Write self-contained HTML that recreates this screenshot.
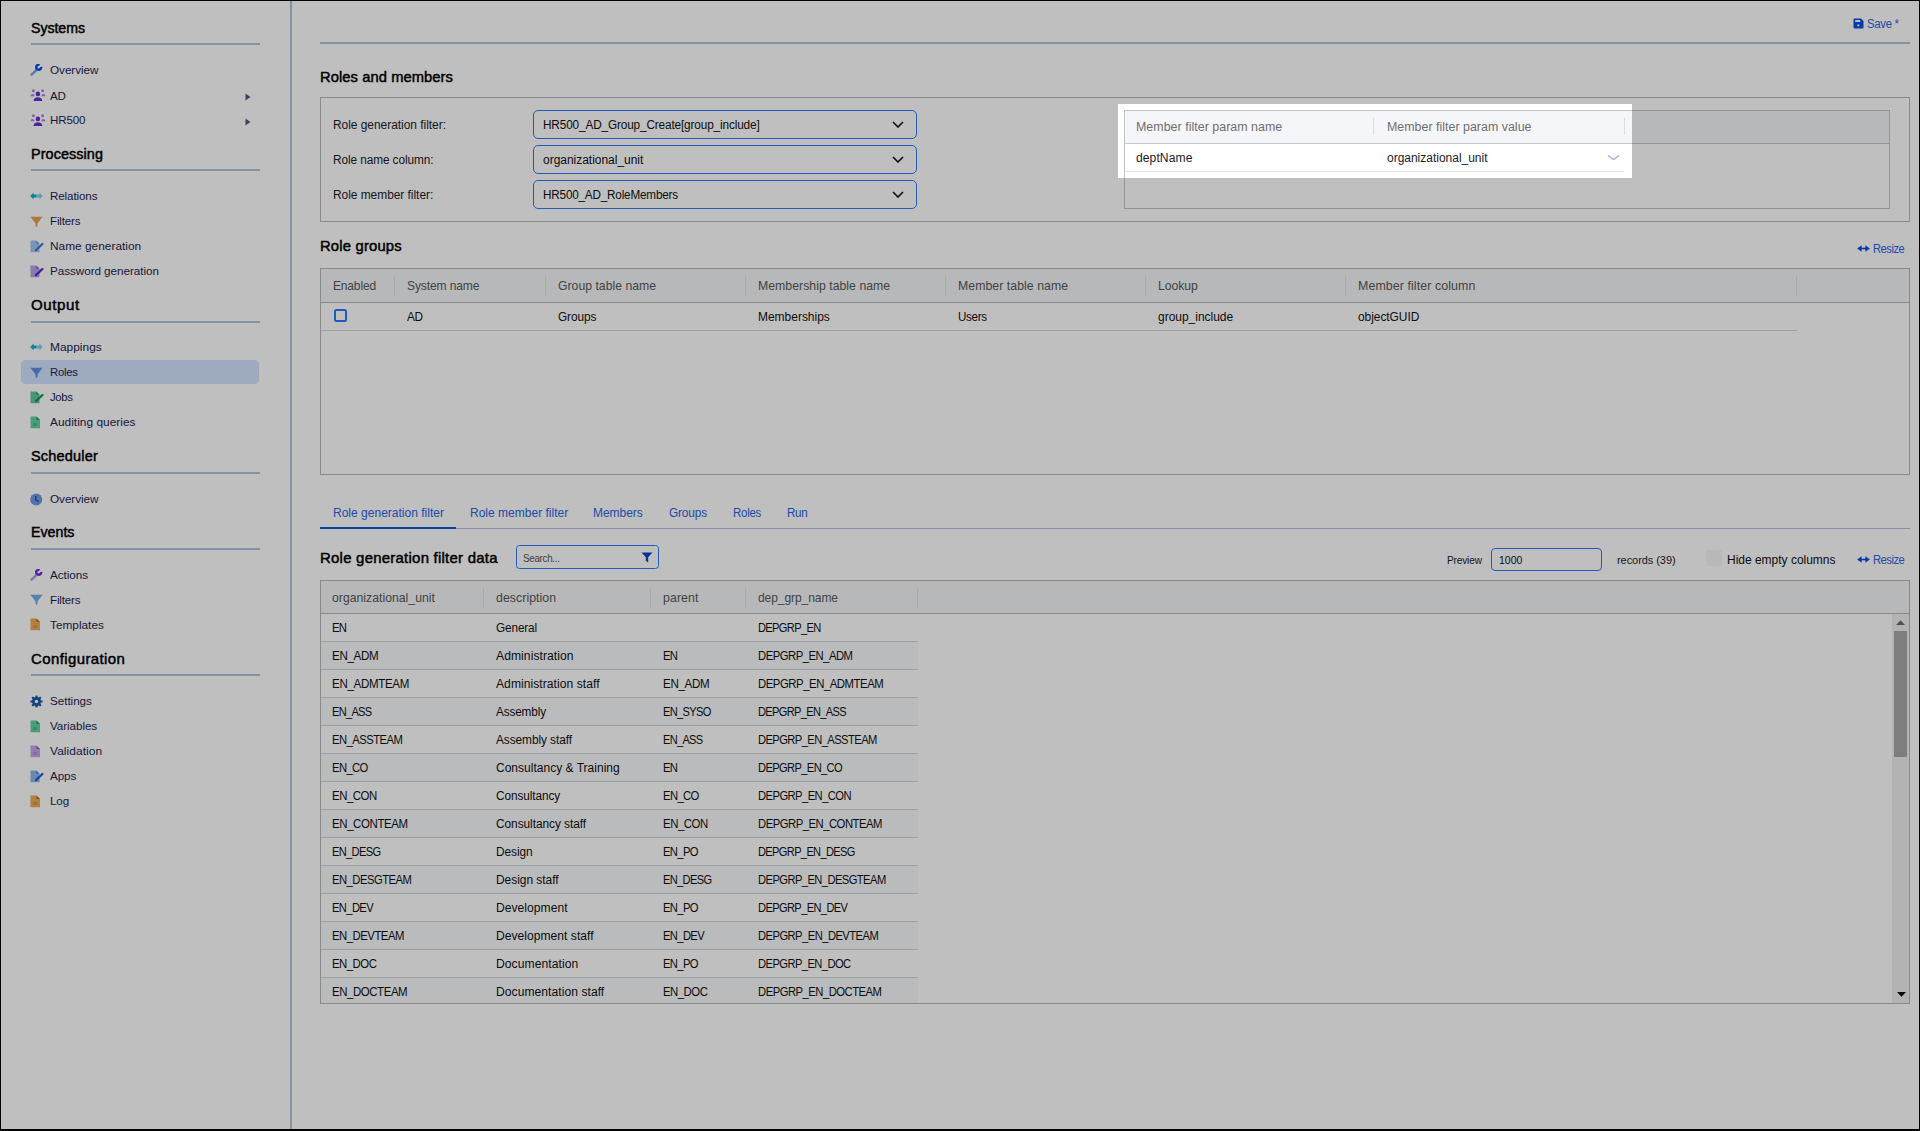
<!DOCTYPE html>
<html><head><meta charset="utf-8"><style>
html,body{margin:0;padding:0;}
body{width:1920px;height:1131px;overflow:hidden;background:#000;font-family:"Liberation Sans", sans-serif;}
#app{position:absolute;left:1px;top:1px;width:1918px;height:1128px;background:#fff;overflow:hidden;}
#inner{position:absolute;left:-1px;top:-1px;width:1920px;height:1131px;}
</style></head><body>
<div id="app"><div id="inner">
<div style="position:absolute;left:31px;top:18px;font-size:14.20px;line-height:20px;color:#000;font-weight:normal;white-space:nowrap;letter-spacing:-0.037px;transform:scaleX(0.9959);transform-origin:0 0;-webkit-text-stroke:0.45px #000;">Systems</div><div style="position:absolute;left:31px;top:43px;width:229px;height:2px;background:#b5c2de"></div><div style="position:absolute;left:30px;top:64.2px;line-height:0"><svg width="14" height="13" viewBox="0 0 14 13"><path d="M1.6 10.6 L6.6 5.9" stroke="#7aa6dc" stroke-width="2.6" stroke-linecap="round"/><path d="M11.2 2.9 A2.5 2.5 0 1 1 9.6 0.9" stroke="#0a4fe0" stroke-width="2.5" fill="none"/></svg></div><div style="position:absolute;left:50px;top:60px;font-size:11.80px;line-height:20px;color:#1e1e52;font-weight:normal;white-space:nowrap;letter-spacing:-0.048px;transform:scaleX(0.9932);transform-origin:0 0;">Overview</div><div style="position:absolute;left:30px;top:88.7px;line-height:0"><svg width="16" height="13" viewBox="0 0 16 13"><circle cx="3.4" cy="1.7" r="1.5" fill="#a48ade"/><circle cx="12.6" cy="1.7" r="1.5" fill="#a48ade"/><path d="M0.5 7.2 Q0.8 5 2.6 5 Q4.4 5 4.7 7.2 Z" fill="#a48ade"/><path d="M11.3 7.2 Q11.6 5 13.4 5 Q15.2 5 15.5 7.2 Z" fill="#a48ade"/><circle cx="7.9" cy="4.9" r="2.3" fill="#6630cc"/><path d="M3.5 12.1 Q3.8 8.3 7.9 8.3 Q12 8.3 12.3 12.1 Z" fill="#6630cc"/></svg></div><div style="position:absolute;left:50px;top:86px;font-size:11.80px;line-height:20px;color:#1e1e52;font-weight:normal;white-space:nowrap;letter-spacing:-0.287px;transform:scaleX(0.9825);transform-origin:0 0;">AD</div><svg style="position:absolute;left:245px;top:92.5px" width="6" height="8" viewBox="0 0 6 8"><path d="M0.5 0.5 L5.5 4 L0.5 7.5 Z" fill="#555a80"/></svg><div style="position:absolute;left:30px;top:113.7px;line-height:0"><svg width="16" height="13" viewBox="0 0 16 13"><circle cx="3.4" cy="1.7" r="1.5" fill="#a48ade"/><circle cx="12.6" cy="1.7" r="1.5" fill="#a48ade"/><path d="M0.5 7.2 Q0.8 5 2.6 5 Q4.4 5 4.7 7.2 Z" fill="#a48ade"/><path d="M11.3 7.2 Q11.6 5 13.4 5 Q15.2 5 15.5 7.2 Z" fill="#a48ade"/><circle cx="7.9" cy="4.9" r="2.3" fill="#6630cc"/><path d="M3.5 12.1 Q3.8 8.3 7.9 8.3 Q12 8.3 12.3 12.1 Z" fill="#6630cc"/></svg></div><div style="position:absolute;left:50px;top:110px;font-size:11.80px;line-height:20px;color:#1e1e52;font-weight:normal;white-space:nowrap;letter-spacing:-0.166px;transform:scaleX(0.9819);transform-origin:0 0;">HR500</div><svg style="position:absolute;left:245px;top:117.5px" width="6" height="8" viewBox="0 0 6 8"><path d="M0.5 0.5 L5.5 4 L0.5 7.5 Z" fill="#555a80"/></svg><div style="position:absolute;left:31px;top:144px;font-size:14.20px;line-height:20px;color:#000;font-weight:normal;white-space:nowrap;letter-spacing:0.097px;transform:scaleX(1.0124);transform-origin:0 0;-webkit-text-stroke:0.45px #000;">Processing</div><div style="position:absolute;left:31px;top:169px;width:229px;height:2px;background:#b5c2de"></div><div style="position:absolute;left:30px;top:192.1px;line-height:0"><svg width="13" height="8" viewBox="0 0 13 8"><path d="M0.2 4 L3.6 0.4 L3.6 2.6 L6.6 2.6 L6.6 5.4 L3.6 5.4 L3.6 7.6 Z" fill="#0eaed2"/><path d="M12.8 4 L9.4 0.4 L9.4 2.6 L6.4 2.6 L6.4 5.4 L9.4 5.4 L9.4 7.6 Z" fill="#86d2e2"/></svg></div><div style="position:absolute;left:50px;top:186px;font-size:11.80px;line-height:20px;color:#1e1e52;font-weight:normal;white-space:nowrap;letter-spacing:-0.108px;transform:scaleX(0.9825);transform-origin:0 0;">Relations</div><div style="position:absolute;left:30px;top:215.7px;line-height:0"><svg width="13" height="12" viewBox="0 0 13 12"><path d="M0.3 0.8 L12.7 0.8 L7.6 7.2 L7.3 10.8 L5.7 10.8 L5.4 7.2 Z" fill="#e6a050"/></svg></div><div style="position:absolute;left:50px;top:211px;font-size:11.80px;line-height:20px;color:#1e1e52;font-weight:normal;white-space:nowrap;letter-spacing:-0.135px;transform:scaleX(0.9747);transform-origin:0 0;">Filters</div><div style="position:absolute;left:30px;top:240.1px;line-height:0"><svg width="14" height="13" viewBox="0 0 14 13"><path d="M0.5 0.5 L6.2 0.5 L9.5 3.8 L9.5 12.2 L0.5 12.2 Z" fill="#a6c6ee"/><path d="M6.2 0.5 L9.5 3.8 L6.2 3.8 Z" fill="#6c9ee6"/><path d="M6 10.2 L12.4 4" stroke="#3b7ee0" stroke-width="2.3" stroke-linecap="round"/></svg></div><div style="position:absolute;left:50px;top:236px;font-size:11.80px;line-height:20px;color:#1e1e52;font-weight:normal;white-space:nowrap;letter-spacing:0.025px;transform:scaleX(1.0039);transform-origin:0 0;">Name generation</div><div style="position:absolute;left:30px;top:265.1px;line-height:0"><svg width="14" height="13" viewBox="0 0 14 13"><path d="M0.5 0.5 L6.2 0.5 L9.5 3.8 L9.5 12.2 L0.5 12.2 Z" fill="#b9a2ea"/><path d="M6.2 0.5 L9.5 3.8 L6.2 3.8 Z" fill="#8a66d8"/><path d="M6 10.2 L12.4 4" stroke="#5a2cc8" stroke-width="2.3" stroke-linecap="round"/></svg></div><div style="position:absolute;left:50px;top:261px;font-size:11.80px;line-height:20px;color:#1e1e52;font-weight:normal;white-space:nowrap;letter-spacing:-0.054px;transform:scaleX(0.9913);transform-origin:0 0;">Password generation</div><div style="position:absolute;left:31px;top:295px;font-size:14.20px;line-height:20px;color:#000;font-weight:normal;white-space:nowrap;letter-spacing:0.550px;transform:scaleX(1.0645);transform-origin:0 0;-webkit-text-stroke:0.45px #000;">Output</div><div style="position:absolute;left:31px;top:321px;width:229px;height:2px;background:#b5c2de"></div><div style="position:absolute;left:30px;top:342.9px;line-height:0"><svg width="13" height="8" viewBox="0 0 13 8"><path d="M0.2 4 L3.6 0.4 L3.6 2.6 L6.6 2.6 L6.6 5.4 L3.6 5.4 L3.6 7.6 Z" fill="#0eaed2"/><path d="M12.8 4 L9.4 0.4 L9.4 2.6 L6.4 2.6 L6.4 5.4 L9.4 5.4 L9.4 7.6 Z" fill="#86d2e2"/></svg></div><div style="position:absolute;left:50px;top:337px;font-size:11.80px;line-height:20px;color:#1e1e52;font-weight:normal;white-space:nowrap;letter-spacing:0.044px;transform:scaleX(1.0060);transform-origin:0 0;">Mappings</div><div style="position:absolute;left:21px;top:360px;width:238px;height:24px;border-radius:4px;background:#d3e3ff"></div><div style="position:absolute;left:30px;top:366.5px;line-height:0"><svg width="13" height="12" viewBox="0 0 13 12"><path d="M0.3 0.8 L12.7 0.8 L7.6 7.2 L7.3 10.8 L5.7 10.8 L5.4 7.2 Z" fill="#5b92e0"/></svg></div><div style="position:absolute;left:50px;top:362px;font-size:11.80px;line-height:20px;color:#1e1e52;font-weight:normal;white-space:nowrap;letter-spacing:-0.283px;transform:scaleX(0.9624);transform-origin:0 0;">Roles</div><div style="position:absolute;left:30px;top:390.9px;line-height:0"><svg width="14" height="13" viewBox="0 0 14 13"><path d="M0.5 0.5 L6.2 0.5 L9.5 3.8 L9.5 12.2 L0.5 12.2 Z" fill="#62c79c"/><path d="M6.2 0.5 L9.5 3.8 L6.2 3.8 Z" fill="#2f9c6c"/><path d="M6 10.2 L12.4 4" stroke="#14975c" stroke-width="2.3" stroke-linecap="round"/></svg></div><div style="position:absolute;left:50px;top:387px;font-size:11.80px;line-height:20px;color:#1e1e52;font-weight:normal;white-space:nowrap;letter-spacing:-0.336px;transform:scaleX(0.9596);transform-origin:0 0;">Jobs</div><div style="position:absolute;left:30px;top:415.9px;line-height:0"><svg width="11" height="13" viewBox="0 0 11 13"><path d="M0.5 0.5 L6.4 0.5 L10 4.1 L10 12.2 L0.5 12.2 Z" fill="#68d0a4"/><path d="M6.4 0.5 L10 4.1 L6.4 4.1 Z" fill="#1f9a62"/><rect x="3" y="7.2" width="4.5" height="2.6" fill="#1f9a62" opacity="0.35"/></svg></div><div style="position:absolute;left:50px;top:412px;font-size:11.80px;line-height:20px;color:#1e1e52;font-weight:normal;white-space:nowrap;letter-spacing:0.029px;transform:scaleX(1.0051);transform-origin:0 0;">Auditing queries</div><div style="position:absolute;left:31px;top:446px;font-size:14.20px;line-height:20px;color:#000;font-weight:normal;white-space:nowrap;letter-spacing:0.177px;transform:scaleX(1.0221);transform-origin:0 0;-webkit-text-stroke:0.45px #000;">Scheduler</div><div style="position:absolute;left:31px;top:472px;width:229px;height:2px;background:#b5c2de"></div><div style="position:absolute;left:30px;top:492.5px;line-height:0"><svg width="13" height="13" viewBox="0 0 13 13"><circle cx="6.2" cy="6.5" r="6" fill="#6f9be0"/><path d="M5.8 3 L5.8 7 L8.4 8.6" stroke="#1d48a8" stroke-width="1.3" fill="none"/></svg></div><div style="position:absolute;left:50px;top:489px;font-size:11.80px;line-height:20px;color:#1e1e52;font-weight:normal;white-space:nowrap;letter-spacing:-0.048px;transform:scaleX(0.9932);transform-origin:0 0;">Overview</div><div style="position:absolute;left:31px;top:522px;font-size:14.20px;line-height:20px;color:#000;font-weight:normal;white-space:nowrap;letter-spacing:0.009px;transform:scaleX(1.0010);transform-origin:0 0;-webkit-text-stroke:0.45px #000;">Events</div><div style="position:absolute;left:31px;top:548px;width:229px;height:2px;background:#b5c2de"></div><div style="position:absolute;left:30px;top:569.0px;line-height:0"><svg width="14" height="13" viewBox="0 0 14 13"><path d="M1.6 10.6 L6.6 5.9" stroke="#b39ee6" stroke-width="2.6" stroke-linecap="round"/><path d="M11.2 2.9 A2.5 2.5 0 1 1 9.6 0.9" stroke="#6a36d8" stroke-width="2.5" fill="none"/></svg></div><div style="position:absolute;left:50px;top:565px;font-size:11.80px;line-height:20px;color:#1e1e52;font-weight:normal;white-space:nowrap;letter-spacing:-0.048px;transform:scaleX(0.9926);transform-origin:0 0;">Actions</div><div style="position:absolute;left:30px;top:594.0px;line-height:0"><svg width="13" height="12" viewBox="0 0 13 12"><path d="M0.3 0.8 L12.7 0.8 L7.6 7.2 L7.3 10.8 L5.7 10.8 L5.4 7.2 Z" fill="#72ace8"/></svg></div><div style="position:absolute;left:50px;top:590px;font-size:11.80px;line-height:20px;color:#1e1e52;font-weight:normal;white-space:nowrap;letter-spacing:-0.135px;transform:scaleX(0.9747);transform-origin:0 0;">Filters</div><div style="position:absolute;left:30px;top:618.4px;line-height:0"><svg width="11" height="13" viewBox="0 0 11 13"><path d="M0.5 0.5 L6.4 0.5 L10 4.1 L10 12.2 L0.5 12.2 Z" fill="#ecac58"/><path d="M6.4 0.5 L10 4.1 L6.4 4.1 Z" fill="#c86a14"/><rect x="3" y="7.2" width="4.5" height="2.6" fill="#c86a14" opacity="0.35"/></svg></div><div style="position:absolute;left:50px;top:615px;font-size:11.80px;line-height:20px;color:#1e1e52;font-weight:normal;white-space:nowrap;letter-spacing:0.007px;transform:scaleX(1.0011);transform-origin:0 0;">Templates</div><div style="position:absolute;left:31px;top:649px;font-size:14.20px;line-height:20px;color:#000;font-weight:normal;white-space:nowrap;letter-spacing:0.383px;transform:scaleX(1.0544);transform-origin:0 0;-webkit-text-stroke:0.45px #000;">Configuration</div><div style="position:absolute;left:31px;top:674px;width:229px;height:2px;background:#b5c2de"></div><div style="position:absolute;left:30px;top:694.9px;line-height:0"><svg width="13" height="13" viewBox="0 0 13 13"><g fill="#1c58a8"><circle cx="6.5" cy="6.5" r="4.5"/><rect x="5.4" y="0.4" width="2.2" height="12.2" rx="0.5" transform="rotate(0 6.5 6.5)"/><rect x="5.4" y="0.4" width="2.2" height="12.2" rx="0.5" transform="rotate(45 6.5 6.5)"/><rect x="5.4" y="0.4" width="2.2" height="12.2" rx="0.5" transform="rotate(90 6.5 6.5)"/><rect x="5.4" y="0.4" width="2.2" height="12.2" rx="0.5" transform="rotate(135 6.5 6.5)"/></g><circle cx="6.5" cy="6.5" r="1.7" fill="#fff"/></svg></div><div style="position:absolute;left:50px;top:691px;font-size:11.80px;line-height:20px;color:#1e1e52;font-weight:normal;white-space:nowrap;letter-spacing:-0.053px;transform:scaleX(0.9912);transform-origin:0 0;">Settings</div><div style="position:absolute;left:30px;top:720.1px;line-height:0"><svg width="11" height="13" viewBox="0 0 11 13"><path d="M0.5 0.5 L6.4 0.5 L10 4.1 L10 12.2 L0.5 12.2 Z" fill="#68d0a4"/><path d="M6.4 0.5 L10 4.1 L6.4 4.1 Z" fill="#1f9a62"/><rect x="3" y="7.2" width="4.5" height="2.6" fill="#1f9a62" opacity="0.35"/></svg></div><div style="position:absolute;left:50px;top:716px;font-size:11.80px;line-height:20px;color:#1e1e52;font-weight:normal;white-space:nowrap;letter-spacing:-0.069px;transform:scaleX(0.9885);transform-origin:0 0;">Variables</div><div style="position:absolute;left:30px;top:745.1px;line-height:0"><svg width="11" height="13" viewBox="0 0 11 13"><path d="M0.5 0.5 L6.4 0.5 L10 4.1 L10 12.2 L0.5 12.2 Z" fill="#c0a8ee"/><path d="M6.4 0.5 L10 4.1 L6.4 4.1 Z" fill="#8a5fd8"/><rect x="3" y="7.2" width="4.5" height="2.6" fill="#8a5fd8" opacity="0.35"/></svg></div><div style="position:absolute;left:50px;top:741px;font-size:11.80px;line-height:20px;color:#1e1e52;font-weight:normal;white-space:nowrap;letter-spacing:0.069px;transform:scaleX(1.0122);transform-origin:0 0;">Validation</div><div style="position:absolute;left:30px;top:770.1px;line-height:0"><svg width="14" height="13" viewBox="0 0 14 13"><path d="M0.5 0.5 L6.2 0.5 L9.5 3.8 L9.5 12.2 L0.5 12.2 Z" fill="#8fb6ea"/><path d="M6.2 0.5 L9.5 3.8 L6.2 3.8 Z" fill="#4d86e0"/><path d="M6 10.2 L12.4 4" stroke="#1f5fd6" stroke-width="2.3" stroke-linecap="round"/></svg></div><div style="position:absolute;left:50px;top:766px;font-size:11.80px;line-height:20px;color:#1e1e52;font-weight:normal;white-space:nowrap;letter-spacing:-0.115px;transform:scaleX(0.9871);transform-origin:0 0;">Apps</div><div style="position:absolute;left:30px;top:795.1px;line-height:0"><svg width="11" height="13" viewBox="0 0 11 13"><path d="M0.5 0.5 L6.4 0.5 L10 4.1 L10 12.2 L0.5 12.2 Z" fill="#ecac58"/><path d="M6.4 0.5 L10 4.1 L6.4 4.1 Z" fill="#c86a14"/><rect x="3" y="7.2" width="4.5" height="2.6" fill="#c86a14" opacity="0.35"/></svg></div><div style="position:absolute;left:50px;top:791px;font-size:11.80px;line-height:20px;color:#1e1e52;font-weight:normal;white-space:nowrap;letter-spacing:-0.126px;transform:scaleX(0.9872);transform-origin:0 0;">Log</div><div style="position:absolute;left:290px;top:0px;width:2px;height:1131px;background:#b6c0d8"></div>
<div style="position:absolute;left:320px;top:42px;width:1590px;height:2px;background:#b5c0d8"></div><svg style="position:absolute;left:1853px;top:18px" width="11" height="11" viewBox="0 0 11 11"><path d="M1.2 0.5 L8 0.5 L10.5 3 L10.5 9.6 Q10.5 10.5 9.6 10.5 L1.4 10.5 Q0.5 10.5 0.5 9.6 L0.5 1.4 Q0.5 0.5 1.2 0.5 Z" fill="#0a4fe0"/><rect x="2.2" y="2" width="5" height="2" fill="#fff"/><circle cx="5.3" cy="7.3" r="1.1" fill="#fff"/></svg><div style="position:absolute;left:1867px;top:14px;font-size:12.00px;line-height:20px;color:#2a66e0;font-weight:normal;white-space:nowrap;letter-spacing:-0.337px;transform:scaleX(0.9523);transform-origin:0 0;">Save *</div><div style="position:absolute;left:320px;top:67px;font-size:14.60px;line-height:20px;color:#000;font-weight:normal;white-space:nowrap;letter-spacing:0.074px;transform:scaleX(1.0090);transform-origin:0 0;-webkit-text-stroke:0.45px #000;">Roles and members</div><div style="position:absolute;left:320px;top:97px;width:1590px;height:125px;box-sizing:border-box;border:1px solid #b8b8b8"></div><div style="position:absolute;left:332.5px;top:115px;font-size:12.00px;line-height:20px;color:#1c1c2a;font-weight:normal;white-space:nowrap;letter-spacing:-0.025px;transform:scaleX(0.9952);transform-origin:0 0;">Role generation filter:</div><div style="position:absolute;left:533px;top:109.5px;width:384px;height:29px;box-sizing:border-box;border:1.6px solid #2f7bff;border-radius:5px"></div><div style="position:absolute;left:543px;top:115px;font-size:12.00px;line-height:20px;color:#111;font-weight:normal;white-space:nowrap;letter-spacing:-0.127px;transform:scaleX(0.9803);transform-origin:0 0;">HR500_AD_Group_Create[group_include]</div><svg style="position:absolute;left:892px;top:121.0px" width="12" height="7" viewBox="0 0 12 7"><path d="M1 1 L6 6 L11 1" stroke="#111" stroke-width="1.6" fill="none"/></svg><div style="position:absolute;left:332.5px;top:150px;font-size:12.00px;line-height:20px;color:#1c1c2a;font-weight:normal;white-space:nowrap;letter-spacing:-0.092px;transform:scaleX(0.9858);transform-origin:0 0;">Role name column:</div><div style="position:absolute;left:533px;top:144.5px;width:384px;height:29px;box-sizing:border-box;border:1.6px solid #2f7bff;border-radius:5px"></div><div style="position:absolute;left:543px;top:150px;font-size:12.00px;line-height:20px;color:#111;font-weight:normal;white-space:nowrap;letter-spacing:-0.011px;transform:scaleX(0.9980);transform-origin:0 0;">organizational_unit</div><svg style="position:absolute;left:892px;top:156.0px" width="12" height="7" viewBox="0 0 12 7"><path d="M1 1 L6 6 L11 1" stroke="#111" stroke-width="1.6" fill="none"/></svg><div style="position:absolute;left:332.5px;top:185px;font-size:12.00px;line-height:20px;color:#1c1c2a;font-weight:normal;white-space:nowrap;letter-spacing:-0.031px;transform:scaleX(0.9945);transform-origin:0 0;">Role member filter:</div><div style="position:absolute;left:533px;top:179.5px;width:384px;height:29px;box-sizing:border-box;border:1.6px solid #2f7bff;border-radius:5px"></div><div style="position:absolute;left:543px;top:185px;font-size:12.00px;line-height:20px;color:#111;font-weight:normal;white-space:nowrap;letter-spacing:-0.184px;transform:scaleX(0.9754);transform-origin:0 0;">HR500_AD_RoleMembers</div><svg style="position:absolute;left:892px;top:191.0px" width="12" height="7" viewBox="0 0 12 7"><path d="M1 1 L6 6 L11 1" stroke="#111" stroke-width="1.6" fill="none"/></svg><div style="position:absolute;left:1124px;top:110px;width:766px;height:99px;box-sizing:border-box;border:1px solid #c4c4c4"></div><div style="position:absolute;left:1125px;top:111px;width:764px;height:32px;background:#f5f6f9;border-bottom:1px solid #c8c8c8"></div><div style="position:absolute;left:1136px;top:117px;font-size:12.30px;line-height:20px;color:#6e6e6e;font-weight:normal;white-space:nowrap;letter-spacing:0.043px;transform:scaleX(1.0068);transform-origin:0 0;">Member filter param name</div><div style="position:absolute;left:1387px;top:117px;font-size:12.30px;line-height:20px;color:#6e6e6e;font-weight:normal;white-space:nowrap;letter-spacing:0.033px;transform:scaleX(1.0055);transform-origin:0 0;">Member filter param value</div><div style="position:absolute;left:1373px;top:118px;width:1px;height:17px;background:#dcdcdc"></div><div style="position:absolute;left:1624px;top:118px;width:1px;height:17px;background:#dcdcdc"></div><div style="position:absolute;left:1136px;top:148px;font-size:12.00px;line-height:20px;color:#1a1a2a;font-weight:normal;white-space:nowrap;letter-spacing:0.073px;transform:scaleX(1.0092);transform-origin:0 0;">deptName</div><div style="position:absolute;left:1387px;top:148px;font-size:12.00px;line-height:20px;color:#1a1a2a;font-weight:normal;white-space:nowrap;letter-spacing:-0.007px;transform:scaleX(0.9988);transform-origin:0 0;">organizational_unit</div><div style="position:absolute;left:1125px;top:171px;width:499px;height:1px;background:#e2e2e2"></div><svg style="position:absolute;left:1607px;top:154px" width="13" height="7" viewBox="0 0 13 7"><path d="M1 1.4 L5.5 4.9 Q6.5 5.6 7.5 4.9 L12 1.4" stroke="#a6aad0" stroke-width="1.3" fill="none"/></svg><div style="position:absolute;left:320px;top:236px;font-size:14.40px;line-height:20px;color:#000;font-weight:normal;white-space:nowrap;letter-spacing:0.200px;transform:scaleX(1.0258);transform-origin:0 0;-webkit-text-stroke:0.45px #000;">Role groups</div><svg style="position:absolute;left:1857px;top:244.9px" width="13" height="7" viewBox="0 0 13 7"><path d="M0.2 3.5 L4.6 0.2 L4.6 6.8 Z M12.8 3.5 L8.4 0.2 L8.4 6.8 Z" fill="#0b4be6"/><rect x="3.5" y="2.7" width="6" height="1.6" fill="#0b4be6"/></svg><div style="position:absolute;left:1873.3px;top:239px;font-size:12.00px;line-height:20px;color:#2a66e0;font-weight:normal;white-space:nowrap;letter-spacing:-0.507px;transform:scaleX(0.9309);transform-origin:0 0;">Resize</div><div style="position:absolute;left:320px;top:268px;width:1590px;height:207px;box-sizing:border-box;border:1px solid #b8b8b8"></div><div style="position:absolute;left:321px;top:269px;width:1588px;height:33px;background:#f5f6f9"></div><div style="position:absolute;left:321px;top:302px;width:1588px;height:1px;background:#b8b8b8"></div><div style="position:absolute;left:332.6px;top:276px;font-size:12.20px;line-height:20px;color:#585858;font-weight:normal;white-space:nowrap;letter-spacing:-0.139px;transform:scaleX(0.9814);transform-origin:0 0;">Enabled</div><div style="position:absolute;left:407px;top:276px;font-size:12.20px;line-height:20px;color:#585858;font-weight:normal;white-space:nowrap;letter-spacing:-0.104px;transform:scaleX(0.9861);transform-origin:0 0;">System name</div><div style="position:absolute;left:407px;top:307px;font-size:12.00px;line-height:20px;color:#111;font-weight:normal;white-space:nowrap;letter-spacing:-0.292px;transform:scaleX(0.9825);transform-origin:0 0;">AD</div><div style="position:absolute;left:558px;top:276px;font-size:12.20px;line-height:20px;color:#585858;font-weight:normal;white-space:nowrap;letter-spacing:0.016px;transform:scaleX(1.0024);transform-origin:0 0;">Group table name</div><div style="position:absolute;left:558px;top:307px;font-size:12.00px;line-height:20px;color:#111;font-weight:normal;white-space:nowrap;letter-spacing:-0.103px;transform:scaleX(0.9869);transform-origin:0 0;">Groups</div><div style="position:absolute;left:758px;top:276px;font-size:12.20px;line-height:20px;color:#585858;font-weight:normal;white-space:nowrap;letter-spacing:0.035px;transform:scaleX(1.0054);transform-origin:0 0;">Membership table name</div><div style="position:absolute;left:758px;top:307px;font-size:12.00px;line-height:20px;color:#111;font-weight:normal;white-space:nowrap;letter-spacing:-0.011px;transform:scaleX(0.9985);transform-origin:0 0;">Memberships</div><div style="position:absolute;left:958px;top:276px;font-size:12.20px;line-height:20px;color:#585858;font-weight:normal;white-space:nowrap;letter-spacing:0.051px;transform:scaleX(1.0076);transform-origin:0 0;">Member table name</div><div style="position:absolute;left:958px;top:307px;font-size:12.00px;line-height:20px;color:#111;font-weight:normal;white-space:nowrap;letter-spacing:-0.302px;transform:scaleX(0.9615);transform-origin:0 0;">Users</div><div style="position:absolute;left:1158px;top:276px;font-size:12.20px;line-height:20px;color:#585858;font-weight:normal;white-space:nowrap;letter-spacing:-0.009px;transform:scaleX(0.9989);transform-origin:0 0;">Lookup</div><div style="position:absolute;left:1158px;top:307px;font-size:12.00px;line-height:20px;color:#111;font-weight:normal;white-space:nowrap;letter-spacing:-0.012px;transform:scaleX(0.9982);transform-origin:0 0;">group_include</div><div style="position:absolute;left:1358px;top:276px;font-size:12.20px;line-height:20px;color:#585858;font-weight:normal;white-space:nowrap;letter-spacing:0.092px;transform:scaleX(1.0153);transform-origin:0 0;">Member filter column</div><div style="position:absolute;left:1358px;top:307px;font-size:12.00px;line-height:20px;color:#111;font-weight:normal;white-space:nowrap;letter-spacing:-0.038px;transform:scaleX(0.9945);transform-origin:0 0;">objectGUID</div><div style="position:absolute;left:394px;top:275px;width:1px;height:21px;background:#e4e4e4"></div><div style="position:absolute;left:545px;top:275px;width:1px;height:21px;background:#e4e4e4"></div><div style="position:absolute;left:745px;top:275px;width:1px;height:21px;background:#e4e4e4"></div><div style="position:absolute;left:945px;top:275px;width:1px;height:21px;background:#e4e4e4"></div><div style="position:absolute;left:1145px;top:275px;width:1px;height:21px;background:#e4e4e4"></div><div style="position:absolute;left:1345px;top:275px;width:1px;height:21px;background:#e4e4e4"></div><div style="position:absolute;left:1796px;top:275px;width:1px;height:21px;background:#e4e4e4"></div><div style="position:absolute;left:321px;top:330px;width:1476px;height:1px;background:#d6d6d6"></div><div style="position:absolute;left:334px;top:309px;width:13px;height:13px;box-sizing:border-box;border:2px solid #2a78ff;border-radius:2.5px"></div><div style="position:absolute;left:332.7px;top:503px;font-size:12.00px;line-height:20px;color:#2a66e0;font-weight:normal;white-space:nowrap;letter-spacing:0.006px;transform:scaleX(1.0012);transform-origin:0 0;">Role generation filter</div><div style="position:absolute;left:469.5px;top:503px;font-size:12.00px;line-height:20px;color:#2a66e0;font-weight:normal;white-space:nowrap;letter-spacing:0.005px;transform:scaleX(1.0008);transform-origin:0 0;">Role member filter</div><div style="position:absolute;left:593.2px;top:503px;font-size:12.00px;line-height:20px;color:#2a66e0;font-weight:normal;white-space:nowrap;letter-spacing:-0.017px;transform:scaleX(0.9980);transform-origin:0 0;">Members</div><div style="position:absolute;left:668.9px;top:503px;font-size:12.00px;line-height:20px;color:#2a66e0;font-weight:normal;white-space:nowrap;letter-spacing:-0.125px;transform:scaleX(0.9841);transform-origin:0 0;">Groups</div><div style="position:absolute;left:733px;top:503px;font-size:12.00px;line-height:20px;color:#2a66e0;font-weight:normal;white-space:nowrap;letter-spacing:-0.310px;transform:scaleX(0.9596);transform-origin:0 0;">Roles</div><div style="position:absolute;left:787px;top:503px;font-size:12.00px;line-height:20px;color:#2a66e0;font-weight:normal;white-space:nowrap;letter-spacing:-0.343px;transform:scaleX(0.9689);transform-origin:0 0;">Run</div><div style="position:absolute;left:320px;top:528px;width:1590px;height:1px;background:#b5c0d8"></div><div style="position:absolute;left:320px;top:526.6px;width:136px;height:2.3999999999999773px;background:#0b50d6"></div><div style="position:absolute;left:320px;top:548px;font-size:14.40px;line-height:20px;color:#000;font-weight:normal;white-space:nowrap;letter-spacing:0.240px;transform:scaleX(1.0378);transform-origin:0 0;-webkit-text-stroke:0.45px #000;">Role generation filter data</div><div style="position:absolute;left:516px;top:545px;width:143px;height:23.5px;box-sizing:border-box;border:1.6px solid #2f7bff;border-radius:3.5px"></div><div style="position:absolute;left:523px;top:549px;font-size:10.40px;line-height:20px;color:#555;font-weight:normal;white-space:nowrap;letter-spacing:-0.298px;transform:scaleX(0.9428);transform-origin:0 0;">Search...</div><svg style="position:absolute;left:641px;top:551.5px" width="12" height="11" viewBox="0 0 12 11"><path d="M0.5 0.5 L11.5 0.5 L7.2 5.3 L7.2 10.5 L4.8 8.8 L4.8 5.3 Z" fill="#0b45c8"/></svg><div style="position:absolute;left:1447px;top:551px;font-size:10.40px;line-height:20px;color:#1c1c2a;font-weight:normal;white-space:nowrap;letter-spacing:-0.170px;transform:scaleX(0.9724);transform-origin:0 0;">Preview</div><div style="position:absolute;left:1491px;top:548px;width:111px;height:23px;box-sizing:border-box;border:1.6px solid #2f7bff;border-radius:4px"></div><div style="position:absolute;left:1499px;top:550px;font-size:10.50px;line-height:20px;color:#111;font-weight:normal;white-space:nowrap;">1000</div><div style="position:absolute;left:1617px;top:550px;font-size:11.00px;line-height:20px;color:#1c1c2a;font-weight:normal;white-space:nowrap;letter-spacing:-0.032px;transform:scaleX(0.9941);transform-origin:0 0;">records (39)</div><div style="position:absolute;left:1706px;top:549.5px;width:16px;height:16px;border-radius:3px;background:#f6f6f6"></div><div style="position:absolute;left:1726.5px;top:550px;font-size:12.00px;line-height:20px;color:#111;font-weight:normal;white-space:nowrap;letter-spacing:-0.006px;transform:scaleX(0.9990);transform-origin:0 0;">Hide empty columns</div><svg style="position:absolute;left:1857px;top:555.7px" width="13" height="7" viewBox="0 0 13 7"><path d="M0.2 3.5 L4.6 0.2 L4.6 6.8 Z M12.8 3.5 L8.4 0.2 L8.4 6.8 Z" fill="#0b4be6"/><rect x="3.5" y="2.7" width="6" height="1.6" fill="#0b4be6"/></svg><div style="position:absolute;left:1873.3px;top:550px;font-size:12.00px;line-height:20px;color:#2a66e0;font-weight:normal;white-space:nowrap;letter-spacing:-0.507px;transform:scaleX(0.9309);transform-origin:0 0;">Resize</div><div style="position:absolute;left:320px;top:580px;width:1590px;height:424px;box-sizing:border-box;border:1px solid #b8b8b8"></div><div style="position:absolute;left:321px;top:581px;width:1588px;height:32px;background:#f5f6f9"></div><div style="position:absolute;left:321px;top:613px;width:1588px;height:1px;background:#b8b8b8"></div><div style="position:absolute;left:332.4px;top:588px;font-size:12.20px;line-height:20px;color:#585858;font-weight:normal;white-space:nowrap;letter-spacing:0.016px;transform:scaleX(1.0029);transform-origin:0 0;">organizational_unit</div><div style="position:absolute;left:496px;top:588px;font-size:12.20px;line-height:20px;color:#585858;font-weight:normal;white-space:nowrap;letter-spacing:0.057px;transform:scaleX(1.0097);transform-origin:0 0;">description</div><div style="position:absolute;left:663.3px;top:588px;font-size:12.20px;line-height:20px;color:#585858;font-weight:normal;white-space:nowrap;letter-spacing:0.088px;transform:scaleX(1.0127);transform-origin:0 0;">parent</div><div style="position:absolute;left:758.3px;top:588px;font-size:12.20px;line-height:20px;color:#585858;font-weight:normal;white-space:nowrap;letter-spacing:-0.088px;transform:scaleX(0.9882);transform-origin:0 0;">dep_grp_name</div><div style="position:absolute;left:483px;top:587px;width:1px;height:21px;background:#e4e4e4"></div><div style="position:absolute;left:650px;top:587px;width:1px;height:21px;background:#e4e4e4"></div><div style="position:absolute;left:745px;top:587px;width:1px;height:21px;background:#e4e4e4"></div><div style="position:absolute;left:917px;top:587px;width:1px;height:21px;background:#e4e4e4"></div><div style="position:absolute;left:321px;top:614px;width:1571px;height:389px;overflow:hidden"><div style="position:absolute;left:0;top:27px;width:597px;height:1px;background:#d6d6d6"></div><div style="position:absolute;left:11.399999999999977px;top:4px;font-size:12.00px;line-height:20px;color:#111;font-weight:normal;white-space:nowrap;letter-spacing:-0.908px;transform:scaleX(0.9455);transform-origin:0 0;">EN</div><div style="position:absolute;left:175px;top:4px;font-size:12.00px;line-height:20px;color:#111;font-weight:normal;white-space:nowrap;letter-spacing:-0.130px;transform:scaleX(0.9818);transform-origin:0 0;">General</div><div style="position:absolute;left:437.29999999999995px;top:4px;font-size:12.00px;line-height:20px;color:#111;font-weight:normal;white-space:nowrap;letter-spacing:-0.699px;transform:scaleX(0.9245);transform-origin:0 0;">DEPGRP_EN</div><div style="position:absolute;left:0;top:28px;width:597px;height:28px;background:#f8fafd"></div><div style="position:absolute;left:0;top:55px;width:597px;height:1px;background:#d6d6d6"></div><div style="position:absolute;left:11.399999999999977px;top:32px;font-size:12.00px;line-height:20px;color:#111;font-weight:normal;white-space:nowrap;letter-spacing:-0.346px;transform:scaleX(0.9654);transform-origin:0 0;">EN_ADM</div><div style="position:absolute;left:175px;top:32px;font-size:12.00px;line-height:20px;color:#111;font-weight:normal;white-space:nowrap;letter-spacing:0.058px;transform:scaleX(1.0098);transform-origin:0 0;">Administration</div><div style="position:absolute;left:342.29999999999995px;top:32px;font-size:12.00px;line-height:20px;color:#111;font-weight:normal;white-space:nowrap;letter-spacing:-0.908px;transform:scaleX(0.9455);transform-origin:0 0;">EN</div><div style="position:absolute;left:437.29999999999995px;top:32px;font-size:12.00px;line-height:20px;color:#111;font-weight:normal;white-space:nowrap;letter-spacing:-0.532px;transform:scaleX(0.9405);transform-origin:0 0;">DEPGRP_EN_ADM</div><div style="position:absolute;left:0;top:83px;width:597px;height:1px;background:#d6d6d6"></div><div style="position:absolute;left:11.399999999999977px;top:60px;font-size:12.00px;line-height:20px;color:#111;font-weight:normal;white-space:nowrap;letter-spacing:-0.337px;transform:scaleX(0.9636);transform-origin:0 0;">EN_ADMTEAM</div><div style="position:absolute;left:175px;top:60px;font-size:12.00px;line-height:20px;color:#111;font-weight:normal;white-space:nowrap;letter-spacing:0.045px;transform:scaleX(1.0083);transform-origin:0 0;">Administration staff</div><div style="position:absolute;left:342.29999999999995px;top:60px;font-size:12.00px;line-height:20px;color:#111;font-weight:normal;white-space:nowrap;letter-spacing:-0.346px;transform:scaleX(0.9654);transform-origin:0 0;">EN_ADM</div><div style="position:absolute;left:437.29999999999995px;top:60px;font-size:12.00px;line-height:20px;color:#111;font-weight:normal;white-space:nowrap;letter-spacing:-0.480px;transform:scaleX(0.9454);transform-origin:0 0;">DEPGRP_EN_ADMTEAM</div><div style="position:absolute;left:0;top:84px;width:597px;height:28px;background:#f8fafd"></div><div style="position:absolute;left:0;top:111px;width:597px;height:1px;background:#d6d6d6"></div><div style="position:absolute;left:11.399999999999977px;top:88px;font-size:12.00px;line-height:20px;color:#111;font-weight:normal;white-space:nowrap;letter-spacing:-0.750px;transform:scaleX(0.9208);transform-origin:0 0;">EN_ASS</div><div style="position:absolute;left:175px;top:88px;font-size:12.00px;line-height:20px;color:#111;font-weight:normal;white-space:nowrap;letter-spacing:-0.141px;transform:scaleX(0.9810);transform-origin:0 0;">Assembly</div><div style="position:absolute;left:342.29999999999995px;top:88px;font-size:12.00px;line-height:20px;color:#111;font-weight:normal;white-space:nowrap;letter-spacing:-0.725px;transform:scaleX(0.9233);transform-origin:0 0;">EN_SYSO</div><div style="position:absolute;left:437.29999999999995px;top:88px;font-size:12.00px;line-height:20px;color:#111;font-weight:normal;white-space:nowrap;letter-spacing:-0.703px;transform:scaleX(0.9194);transform-origin:0 0;">DEPGRP_EN_ASS</div><div style="position:absolute;left:0;top:139px;width:597px;height:1px;background:#d6d6d6"></div><div style="position:absolute;left:11.399999999999977px;top:116px;font-size:12.00px;line-height:20px;color:#111;font-weight:normal;white-space:nowrap;letter-spacing:-0.560px;transform:scaleX(0.9376);transform-origin:0 0;">EN_ASSTEAM</div><div style="position:absolute;left:175px;top:116px;font-size:12.00px;line-height:20px;color:#111;font-weight:normal;white-space:nowrap;letter-spacing:-0.068px;transform:scaleX(0.9886);transform-origin:0 0;">Assembly staff</div><div style="position:absolute;left:342.29999999999995px;top:116px;font-size:12.00px;line-height:20px;color:#111;font-weight:normal;white-space:nowrap;letter-spacing:-0.750px;transform:scaleX(0.9208);transform-origin:0 0;">EN_ASS</div><div style="position:absolute;left:437.29999999999995px;top:116px;font-size:12.00px;line-height:20px;color:#111;font-weight:normal;white-space:nowrap;letter-spacing:-0.607px;transform:scaleX(0.9296);transform-origin:0 0;">DEPGRP_EN_ASSTEAM</div><div style="position:absolute;left:0;top:140px;width:597px;height:28px;background:#f8fafd"></div><div style="position:absolute;left:0;top:167px;width:597px;height:1px;background:#d6d6d6"></div><div style="position:absolute;left:11.399999999999977px;top:144px;font-size:12.00px;line-height:20px;color:#111;font-weight:normal;white-space:nowrap;letter-spacing:-0.649px;transform:scaleX(0.9372);transform-origin:0 0;">EN_CO</div><div style="position:absolute;left:175px;top:144px;font-size:12.00px;line-height:20px;color:#111;font-weight:normal;white-space:nowrap;letter-spacing:0.007px;transform:scaleX(1.0012);transform-origin:0 0;">Consultancy &amp; Training</div><div style="position:absolute;left:342.29999999999995px;top:144px;font-size:12.00px;line-height:20px;color:#111;font-weight:normal;white-space:nowrap;letter-spacing:-0.908px;transform:scaleX(0.9455);transform-origin:0 0;">EN</div><div style="position:absolute;left:437.29999999999995px;top:144px;font-size:12.00px;line-height:20px;color:#111;font-weight:normal;white-space:nowrap;letter-spacing:-0.662px;transform:scaleX(0.9262);transform-origin:0 0;">DEPGRP_EN_CO</div><div style="position:absolute;left:0;top:195px;width:597px;height:1px;background:#d6d6d6"></div><div style="position:absolute;left:11.399999999999977px;top:172px;font-size:12.00px;line-height:20px;color:#111;font-weight:normal;white-space:nowrap;letter-spacing:-0.488px;transform:scaleX(0.9512);transform-origin:0 0;">EN_CON</div><div style="position:absolute;left:175px;top:172px;font-size:12.00px;line-height:20px;color:#111;font-weight:normal;white-space:nowrap;letter-spacing:-0.093px;transform:scaleX(0.9858);transform-origin:0 0;">Consultancy</div><div style="position:absolute;left:342.29999999999995px;top:172px;font-size:12.00px;line-height:20px;color:#111;font-weight:normal;white-space:nowrap;letter-spacing:-0.649px;transform:scaleX(0.9372);transform-origin:0 0;">EN_CO</div><div style="position:absolute;left:437.29999999999995px;top:172px;font-size:12.00px;line-height:20px;color:#111;font-weight:normal;white-space:nowrap;letter-spacing:-0.593px;transform:scaleX(0.9338);transform-origin:0 0;">DEPGRP_EN_CON</div><div style="position:absolute;left:0;top:196px;width:597px;height:28px;background:#f8fafd"></div><div style="position:absolute;left:0;top:223px;width:597px;height:1px;background:#d6d6d6"></div><div style="position:absolute;left:11.399999999999977px;top:200px;font-size:12.00px;line-height:20px;color:#111;font-weight:normal;white-space:nowrap;letter-spacing:-0.416px;transform:scaleX(0.9551);transform-origin:0 0;">EN_CONTEAM</div><div style="position:absolute;left:175px;top:200px;font-size:12.00px;line-height:20px;color:#111;font-weight:normal;white-space:nowrap;letter-spacing:-0.052px;transform:scaleX(0.9909);transform-origin:0 0;">Consultancy staff</div><div style="position:absolute;left:342.29999999999995px;top:200px;font-size:12.00px;line-height:20px;color:#111;font-weight:normal;white-space:nowrap;letter-spacing:-0.488px;transform:scaleX(0.9512);transform-origin:0 0;">EN_CON</div><div style="position:absolute;left:437.29999999999995px;top:200px;font-size:12.00px;line-height:20px;color:#111;font-weight:normal;white-space:nowrap;letter-spacing:-0.525px;transform:scaleX(0.9403);transform-origin:0 0;">DEPGRP_EN_CONTEAM</div><div style="position:absolute;left:0;top:251px;width:597px;height:1px;background:#d6d6d6"></div><div style="position:absolute;left:11.399999999999977px;top:228px;font-size:12.00px;line-height:20px;color:#111;font-weight:normal;white-space:nowrap;letter-spacing:-0.719px;transform:scaleX(0.9247);transform-origin:0 0;">EN_DESG</div><div style="position:absolute;left:175px;top:228px;font-size:12.00px;line-height:20px;color:#111;font-weight:normal;white-space:nowrap;letter-spacing:-0.074px;transform:scaleX(0.9900);transform-origin:0 0;">Design</div><div style="position:absolute;left:342.29999999999995px;top:228px;font-size:12.00px;line-height:20px;color:#111;font-weight:normal;white-space:nowrap;letter-spacing:-0.657px;transform:scaleX(0.9354);transform-origin:0 0;">EN_PO</div><div style="position:absolute;left:437.29999999999995px;top:228px;font-size:12.00px;line-height:20px;color:#111;font-weight:normal;white-space:nowrap;letter-spacing:-0.693px;transform:scaleX(0.9215);transform-origin:0 0;">DEPGRP_EN_DESG</div><div style="position:absolute;left:0;top:252px;width:597px;height:28px;background:#f8fafd"></div><div style="position:absolute;left:0;top:279px;width:597px;height:1px;background:#d6d6d6"></div><div style="position:absolute;left:11.399999999999977px;top:256px;font-size:12.00px;line-height:20px;color:#111;font-weight:normal;white-space:nowrap;letter-spacing:-0.560px;transform:scaleX(0.9382);transform-origin:0 0;">EN_DESGTEAM</div><div style="position:absolute;left:175px;top:256px;font-size:12.00px;line-height:20px;color:#111;font-weight:normal;white-space:nowrap;letter-spacing:-0.025px;transform:scaleX(0.9957);transform-origin:0 0;">Design staff</div><div style="position:absolute;left:342.29999999999995px;top:256px;font-size:12.00px;line-height:20px;color:#111;font-weight:normal;white-space:nowrap;letter-spacing:-0.719px;transform:scaleX(0.9247);transform-origin:0 0;">EN_DESG</div><div style="position:absolute;left:437.29999999999995px;top:256px;font-size:12.00px;line-height:20px;color:#111;font-weight:normal;white-space:nowrap;letter-spacing:-0.605px;transform:scaleX(0.9305);transform-origin:0 0;">DEPGRP_EN_DESGTEAM</div><div style="position:absolute;left:0;top:307px;width:597px;height:1px;background:#d6d6d6"></div><div style="position:absolute;left:11.399999999999977px;top:284px;font-size:12.00px;line-height:20px;color:#111;font-weight:normal;white-space:nowrap;letter-spacing:-0.662px;transform:scaleX(0.9311);transform-origin:0 0;">EN_DEV</div><div style="position:absolute;left:175px;top:284px;font-size:12.00px;line-height:20px;color:#111;font-weight:normal;white-space:nowrap;letter-spacing:0.043px;transform:scaleX(1.0060);transform-origin:0 0;">Development</div><div style="position:absolute;left:342.29999999999995px;top:284px;font-size:12.00px;line-height:20px;color:#111;font-weight:normal;white-space:nowrap;letter-spacing:-0.657px;transform:scaleX(0.9354);transform-origin:0 0;">EN_PO</div><div style="position:absolute;left:437.29999999999995px;top:284px;font-size:12.00px;line-height:20px;color:#111;font-weight:normal;white-space:nowrap;letter-spacing:-0.666px;transform:scaleX(0.9241);transform-origin:0 0;">DEPGRP_EN_DEV</div><div style="position:absolute;left:0;top:308px;width:597px;height:28px;background:#f8fafd"></div><div style="position:absolute;left:0;top:335px;width:597px;height:1px;background:#d6d6d6"></div><div style="position:absolute;left:11.399999999999977px;top:312px;font-size:12.00px;line-height:20px;color:#111;font-weight:normal;white-space:nowrap;letter-spacing:-0.511px;transform:scaleX(0.9434);transform-origin:0 0;">EN_DEVTEAM</div><div style="position:absolute;left:175px;top:312px;font-size:12.00px;line-height:20px;color:#111;font-weight:normal;white-space:nowrap;letter-spacing:0.033px;transform:scaleX(1.0055);transform-origin:0 0;">Development staff</div><div style="position:absolute;left:342.29999999999995px;top:312px;font-size:12.00px;line-height:20px;color:#111;font-weight:normal;white-space:nowrap;letter-spacing:-0.662px;transform:scaleX(0.9311);transform-origin:0 0;">EN_DEV</div><div style="position:absolute;left:437.29999999999995px;top:312px;font-size:12.00px;line-height:20px;color:#111;font-weight:normal;white-space:nowrap;letter-spacing:-0.580px;transform:scaleX(0.9331);transform-origin:0 0;">DEPGRP_EN_DEVTEAM</div><div style="position:absolute;left:0;top:363px;width:597px;height:1px;background:#d6d6d6"></div><div style="position:absolute;left:11.399999999999977px;top:340px;font-size:12.00px;line-height:20px;color:#111;font-weight:normal;white-space:nowrap;letter-spacing:-0.532px;transform:scaleX(0.9468);transform-origin:0 0;">EN_DOC</div><div style="position:absolute;left:175px;top:340px;font-size:12.00px;line-height:20px;color:#111;font-weight:normal;white-space:nowrap;letter-spacing:0.063px;transform:scaleX(1.0094);transform-origin:0 0;">Documentation</div><div style="position:absolute;left:342.29999999999995px;top:340px;font-size:12.00px;line-height:20px;color:#111;font-weight:normal;white-space:nowrap;letter-spacing:-0.657px;transform:scaleX(0.9354);transform-origin:0 0;">EN_PO</div><div style="position:absolute;left:437.29999999999995px;top:340px;font-size:12.00px;line-height:20px;color:#111;font-weight:normal;white-space:nowrap;letter-spacing:-0.611px;transform:scaleX(0.9317);transform-origin:0 0;">DEPGRP_EN_DOC</div><div style="position:absolute;left:0;top:364px;width:597px;height:28px;background:#f8fafd"></div><div style="position:absolute;left:0;top:391px;width:597px;height:1px;background:#d6d6d6"></div><div style="position:absolute;left:11.399999999999977px;top:368px;font-size:12.00px;line-height:20px;color:#111;font-weight:normal;white-space:nowrap;letter-spacing:-0.440px;transform:scaleX(0.9525);transform-origin:0 0;">EN_DOCTEAM</div><div style="position:absolute;left:175px;top:368px;font-size:12.00px;line-height:20px;color:#111;font-weight:normal;white-space:nowrap;letter-spacing:0.048px;transform:scaleX(1.0080);transform-origin:0 0;">Documentation staff</div><div style="position:absolute;left:342.29999999999995px;top:368px;font-size:12.00px;line-height:20px;color:#111;font-weight:normal;white-space:nowrap;letter-spacing:-0.532px;transform:scaleX(0.9468);transform-origin:0 0;">EN_DOC</div><div style="position:absolute;left:437.29999999999995px;top:368px;font-size:12.00px;line-height:20px;color:#111;font-weight:normal;white-space:nowrap;letter-spacing:-0.539px;transform:scaleX(0.9387);transform-origin:0 0;">DEPGRP_EN_DOCTEAM</div></div><div style="position:absolute;left:1892px;top:614px;width:17px;height:389px;background:#efefef"></div><div style="position:absolute;left:1894px;top:630.5px;width:13px;height:126.5px;background:#a9a9a9"></div><svg style="position:absolute;left:1896px;top:620px" width="9" height="5" viewBox="0 0 9 5"><path d="M0 5 L4.5 0.3 L9 5 Z" fill="#6b6b6b"/></svg><svg style="position:absolute;left:1896.5px;top:991.5px" width="9" height="5" viewBox="0 0 9 5"><path d="M0 0 L4.5 4.7 L9 0 Z" fill="#000"/></svg>
<div style="position:absolute;left:1118px;top:104px;width:514px;height:74px;box-shadow:0 0 0 4000px rgba(0,0,0,0.25)"></div>
</div></div>
</body></html>
